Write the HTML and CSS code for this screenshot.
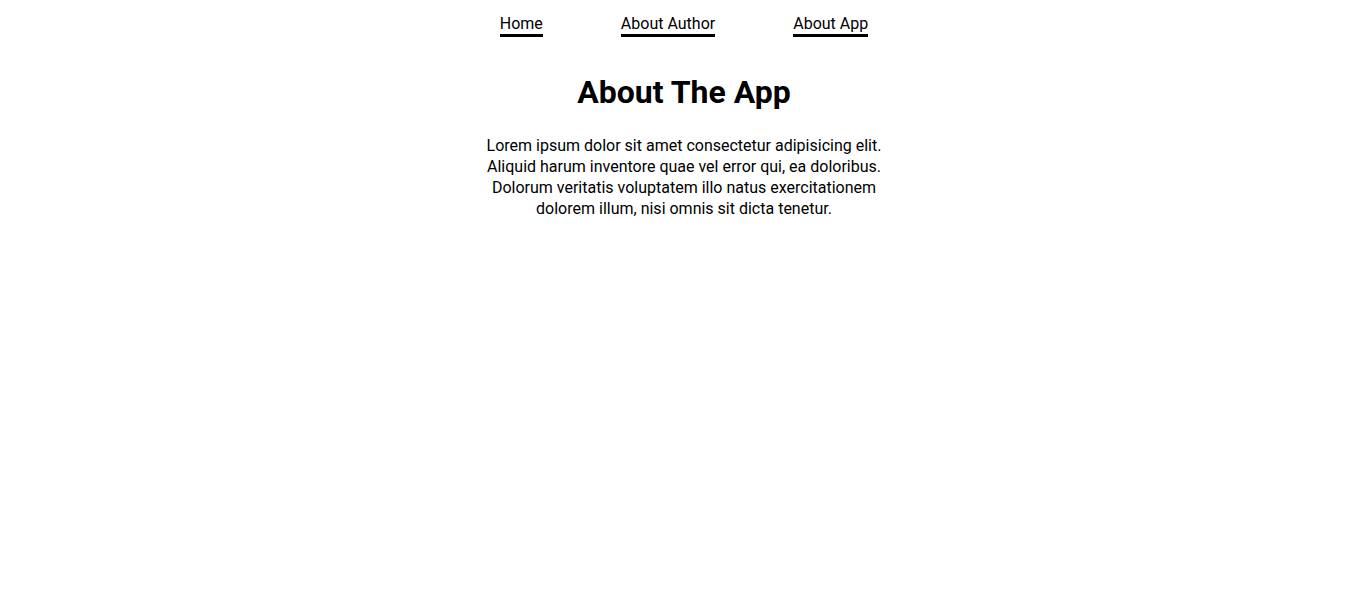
FILE: index.html
```html
<!DOCTYPE html>
<html>
<head>
<meta charset="utf-8">
<link rel="stylesheet" href="styles.css">
</head>
<body>
<nav class="nav">
  <a class="nav-link" href="#">Home</a>
  <a class="nav-link" href="#">About Author</a>
  <a class="nav-link" href="#">About App</a>
</nav>
<main class="content">
  <h1 class="title">About The App</h1>
  <p class="text">Lorem ipsum dolor sit amet consectetur adipisicing elit. Aliquid harum inventore quae vel error qui, ea doloribus. Dolorum veritatis voluptatem illo natus exercitationem dolorem illum, nisi omnis sit dicta tenetur.</p>
</main>
</body>
</html>
```
FILE: styles.css
```css
body {
  margin: 0;
  font-family: Roboto, "Liberation Sans", sans-serif;
  color: #000;
  background: #fff;
}
.nav {
  display: flex;
  justify-content: center;
  gap: 78px;
  padding-top: 14px;
}
.nav-link {
  color: #000;
  text-decoration: none;
  font-size: 16px;
  line-height: 20px;
  border-bottom: 3px solid #000;
}
.content {
  display: flex;
  flex-direction: column;
  align-items: center;
  text-align: center;
}
.title {
  font-size: 32px;
  font-weight: 700;
  margin: 36px 0 0;
  line-height: 38px;
}
.text {
  max-width: 400px;
  font-size: 16px;
  line-height: 21px;
  margin: 24px 0 0;
}
```
